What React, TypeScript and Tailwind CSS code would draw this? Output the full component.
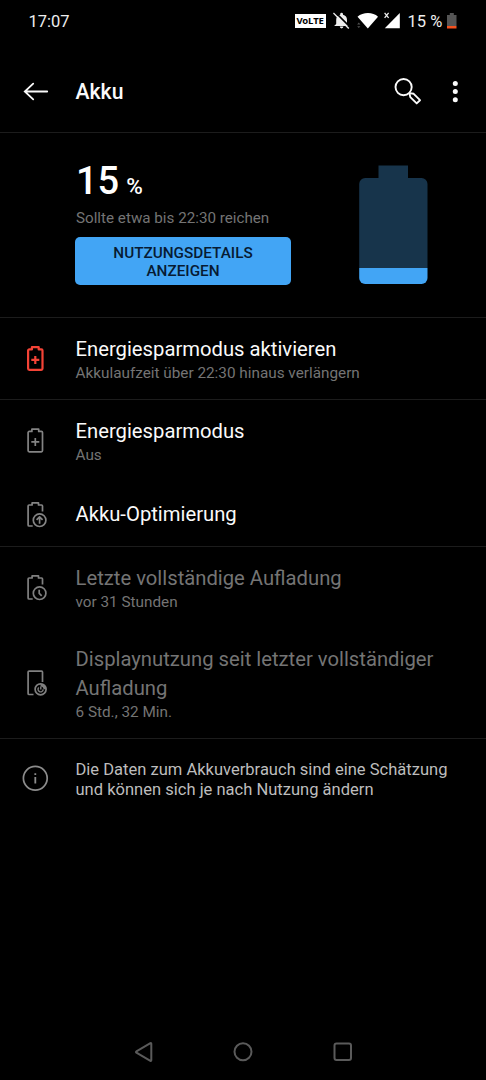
import React from 'react';
import clsx from 'clsx';

interface SettingRowProps {
  icon: React.ReactNode;
  title: string;
  summary?: string;
  disabled?: boolean;
  className?: string;
}

const iconProps = {
  width: 30,
  height: 30,
  viewBox: '0 0 30 30',
  fill: 'none',
  stroke: 'currentColor',
  strokeLinejoin: 'round' as const,
};

const BatteryPlusIcon = ({ bold = false }: { bold?: boolean }) => (
  <svg {...iconProps} strokeWidth={bold ? 2.2 : 1.7}>
    <path d="M9.3 5.4h2.6V3.2h6.8v2.2h2.6a1.2 1.2 0 0 1 1.2 1.2v18a1.2 1.2 0 0 1-1.2 1.2h-12a1.2 1.2 0 0 1-1.2-1.2v-18a1.2 1.2 0 0 1 1.2-1.2z" />
    <path d="M15.3 11.9v8M11.3 15.9h8" />
  </svg>
);

const BatteryBadgeIcon = ({ children }: { children: React.ReactNode }) => (
  <svg {...iconProps} strokeWidth={1.7}>
    <path d="M12.7 26H9.1a1 1 0 0 1-1-1V6a1 1 0 0 1 1-1h3V2.9h6.4V5h3a1 1 0 0 1 1 1v5.6" />
    <circle cx="19.6" cy="20.2" r="6.3" />
    {children}
  </svg>
);

const ScreenTimeIcon = () => (
  <svg {...iconProps} strokeWidth={1.7}>
    <path d="M13.5 26.5H9.1a1 1 0 0 1-1-1V4.1a1 1 0 0 1 1-1h12.4a1 1 0 0 1 1 1v10" />
    <circle cx="20.6" cy="21.3" r="5.5" />
    <path d="M20.6 15.8a5.5 5.5 0 0 1 5.5 5.5h-2.6a2.9 2.9 0 0 0-2.9-2.9z" fill="currentColor" stroke="none" />
    <path d="M18.8 19.4a2.6 2.6 0 1 0 4.4 2M20.8 21.6v-3.2" strokeWidth={1.4} />
  </svg>
);

const InfoIcon = () => (
  <svg {...iconProps} strokeWidth={1.7}>
    <circle cx="15.3" cy="15.3" r="11.9" />
    <path d="M15.3 14v6.6M15.3 10.2v1.9" strokeWidth={1.8} />
  </svg>
);

const SettingRow: React.FC<SettingRowProps> = ({ icon, title, summary, disabled, className }) => (
  <div className={clsx('flex items-center pl-5', disabled ? 'text-[#747474]' : 'text-[#fafafa]', className)}>
    <div className="w-[55.5px] shrink-0">{icon}</div>
    <div className="pr-8">
      <div className="text-[20.24px] leading-[29px]">{title}</div>
      {summary && <div className="text-[15.3px] leading-[19px] text-[#747474]">{summary}</div>}
    </div>
  </div>
);

const StatusBar = () => (
  <div className="flex h-[42px] items-center pr-[29px] pl-[28.5px] text-[16.5px] text-[#eeeeee]">
    <span className="pt-[2px]">17:07</span>
    <div className="ml-auto flex items-center">
      <span className="flex h-[14px] w-[31px] items-center justify-center bg-white font-['Open_Sans',sans-serif] text-[9.5px] font-bold tracking-[-0.2px] text-black">
        VoLTE
      </span>
      <svg className="ml-[7px]" width="18" height="18" viewBox="0 0 18 18">
        <path d="M8.6.8A1.4 1.4 0 0 1 10 2.2v.5c2.6.6 4 2.5 4 5.2v4l2.1 2.1H1.1l2.1-2.1v-4c0-2.7 1.4-4.6 4-5.2v-.5A1.4 1.4 0 0 1 8.6.8zM6.800 14.600h3.600a1.800 1.800 0 0 1-3.600 0z" fill="#eee" />
        <path d="M1.6-.4l16 16" stroke="#000" strokeWidth="1.6" />
        <path d="M.4 1l15.4 15.4" stroke="#eee" strokeWidth="1.4" />
      </svg>
      <svg className="ml-[6px]" width="22" height="18" viewBox="0 0 22 18">
        <path d="M.5 4.700C6-.1 16-.1 21 4.700L10.800 16.500z" fill="#fff" />
        <path d="M.2 12.400l1.600-1.800 1.600 1.800zM.2 14.200L1.800 16l1.600-1.800z" fill="#555" />
      </svg>
      <svg className="ml-[5px]" width="17" height="18" viewBox="0 0 17 18">
        <path d="M15.800 1v15.200H.8z" fill="#fff" />
        <path d="M.6.8l4 5M4.600.8l-4 5" stroke="#eee" strokeWidth="1.3" />
      </svg>
      <span className="ml-[7px] w-[35.5px] pt-[2px] whitespace-nowrap">15 %</span>
      <svg className="ml-[4px]" width="10" height="16" viewBox="0 0 10 16">
        <path d="M0 2h2.800V0h4v2h2.700v11H0z" fill="#555" />
        <path d="M0 13h9.500v2.500H0z" fill="#f4511e" />
      </svg>
    </div>
  </div>
);

const Header = () => (
  <div className="flex h-[91px] items-center border-b border-[#1c1c1c] pt-[9px] pl-[23px] text-[#fafafa]">
    <svg width="26" height="20" viewBox="0 0 26 20" fill="none" stroke="currentColor" strokeWidth="1.8" strokeLinecap="round">
      <path d="M24.2 9.5H2M10.2 1.7L1.8 9.500l8.400 7.800" />
    </svg>
    <h1 className="ml-[26.5px] pt-px text-[21.2px] font-medium">Akku</h1>
    <svg className="ml-auto" width="28" height="28" viewBox="0 0 28 28" fill="none" stroke="currentColor" strokeWidth="1.9">
      <circle cx="9.6" cy="9.1" r="8.1" />
      <path d="M15.4 15.1l4.3.7 6.3 6.400-3.300 3.200-6.400-6.300z" strokeLinejoin="round" />
    </svg>
    <svg className="mr-[26px] ml-[28px]" width="10" height="24" viewBox="0 0 10 24" fill="currentColor">
      <circle cx="5.3" cy="3.5" r="2.5" />
      <circle cx="5.3" cy="11.5" r="2.5" />
      <circle cx="5.3" cy="19.7" r="2.5" />
    </svg>
  </div>
);

const BatterySummary = () => (
  <div className="flex h-[185px] border-b border-[#1c1c1c] pl-[75px]">
    <div className="w-[216px] pt-[23px]">
      <div className="h-[50px] pl-px leading-[50px] font-medium text-white">
        <span className="text-[38px]">15</span>
        <span className="ml-[7px] text-[22.5px]">%</span>
      </div>
      <div className="pt-[2px] pl-px text-[15.2px] leading-[20px] whitespace-nowrap text-[#747474]">Sollte etwa bis 22:30 reichen</div>
      <button className="mt-[9px] block h-12 w-full rounded-[5px] bg-[#42a5f5] px-8 pt-px text-[15.3px] leading-[18px] font-medium text-[#071b33]">
        NUTZUNGSDETAILS ANZEIGEN
      </button>
    </div>
    <svg className="mt-[32px] ml-[68px]" width="69" height="120" viewBox="0 0 69 120">
      <path d="M19.5.5H49V13h13.500a6 6 0 0 1 6 6v84H.2V19a6 6 0 0 1 6-6h13.300z" fill="#17344b" />
      <path d="M.2 103h68.300v10a6 6 0 0 1-6 6H6.200a6 6 0 0 1-6-6z" fill="#42a5f5" />
    </svg>
  </div>
);

const NavBar = () => (
  <div className="mt-auto flex h-[57px] items-center justify-between px-[133px] text-[#5a5a5a]">
    <svg width="20" height="22" viewBox="0 0 20 22" fill="none" stroke="currentColor" strokeWidth="2">
      <path d="M18.3 2.700v16.600a.6.6 0 0 1-.9.500L3.400 11.700a.8.8 0 0 1 0-1.400l14-8.100a.6.6 0 0 1 .9.500z" />
    </svg>
    <svg width="22" height="22" viewBox="0 0 22 22" fill="none" stroke="currentColor" strokeWidth="2">
      <circle cx="11" cy="10.8" r="8.5" />
    </svg>
    <svg width="20" height="20" viewBox="0 0 20 20" fill="none" stroke="currentColor" strokeWidth="2">
      <rect x="1.5" y="1.5" width="16.5" height="16.5" rx="2" />
    </svg>
  </div>
);

export default function App() {
  return (
    <div className="flex h-[1080px] w-[486px] flex-col overflow-hidden bg-black font-['Roboto',sans-serif]">
      <StatusBar />
      <Header />
      <BatterySummary />
      <SettingRow
        className="h-[82px] border-b border-[#1c1c1c]"
        icon={<div className="text-[#f44336]"><BatteryPlusIcon bold /></div>}
        title="Energiesparmodus aktivieren"
        summary="Akkulaufzeit über 22:30 hinaus verlängern"
      />
      <div className="border-b border-[#1c1c1c]">
        <SettingRow
          className="h-[82px]"
          icon={<div className="text-[#848484]"><BatteryPlusIcon /></div>}
          title="Energiesparmodus"
          summary="Aus"
        />
        <SettingRow
          className="h-[64px] pt-px"
          icon={
            <div className="text-[#848484]">
              <BatteryBadgeIcon>
                <path d="M19.6 23.8V17M16.6 19.8l3-3 3 3" />
              </BatteryBadgeIcon>
            </div>
          }
          title="Akku-Optimierung"
        />
      </div>
      <div className="border-b border-[#1c1c1c]">
        <SettingRow
          disabled
          className="h-[81px]"
          icon={
            <div className="text-[#808080]">
              <BatteryBadgeIcon>
                <path d="M19.2 16.8v3.6l2.5 2.5" />
              </BatteryBadgeIcon>
            </div>
          }
          title="Letzte vollständige Aufladung"
          summary="vor 31 Stunden"
        />
        <SettingRow
          disabled
          className="h-[110px]"
          icon={<div className="text-[#808080]"><ScreenTimeIcon /></div>}
          title="Displaynutzung seit letzter vollständiger Aufladung"
          summary="6 Std., 32 Min."
        />
      </div>
      <div className="flex h-[80px] items-center pl-5 text-[#8c8c8c]">
        <div className="w-[55.5px] shrink-0 pb-[2px]">
          <InfoIcon />
        </div>
        <p className="pt-px pr-8 text-[16.55px] leading-[19.5px] text-[#bdbdbd]">
          Die Daten zum Akkuverbrauch sind eine Schätzung und können sich je nach Nutzung ändern
        </p>
      </div>
      <NavBar />
    </div>
  );
}
